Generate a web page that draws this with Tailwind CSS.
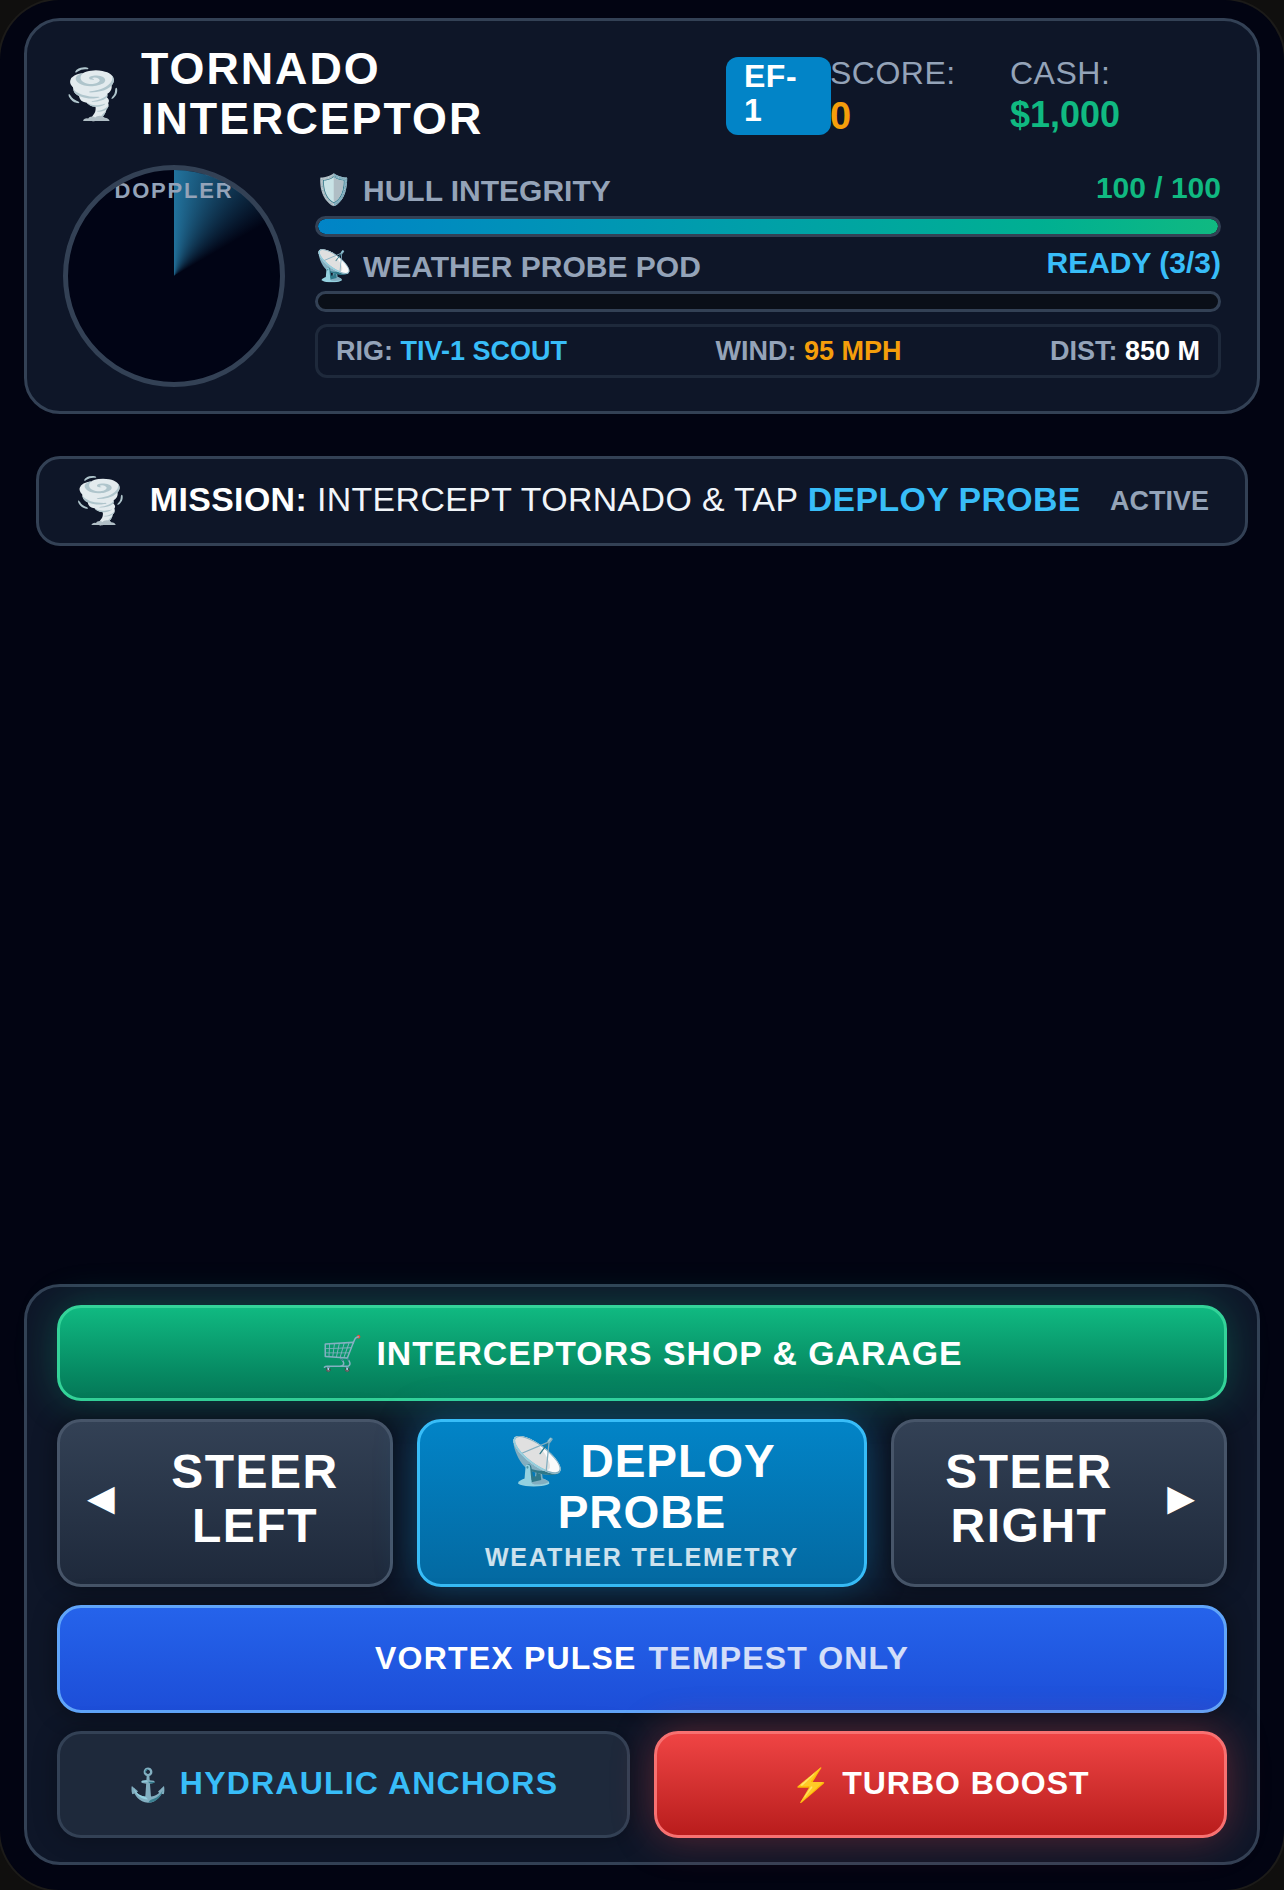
<!DOCTYPE html>
<html lang="en">
  <head>
    <meta charset="UTF-8" />
    <meta name="viewport" content="width=device-width, initial-scale=1.0" />
    <script src="https://cdn.jsdelivr.net/npm/@tailwindcss/browser@4"></script>
    <title>Tornado Interceptor</title>
  </head>
  <body class="bg-[#100f0e] font-['Liberation_Sans','Noto_Color_Emoji',sans-serif]">
    <div class="w-[1284px] h-[1890px] rounded-[60px] shadow-[0_0_0_2px_#1c1b19] bg-[#020412] flex flex-col justify-between px-[24px] pt-[18px] pb-[25px] overflow-hidden">
      <div>
        <!-- top hud -->
        <div class="h-[396px] border-[3px] border-[#334155] rounded-[36px] bg-[#0e1628] px-[36px] pt-[24px]">
          <div class="flex items-center h-[100px]">
            <div class="w-[78px] text-[48px] leading-none">🌪️</div>
            <h1 class="w-[585px] pb-[4px] text-[44.8px] leading-[50px] font-bold tracking-[2px] text-white">TORNADO<br />INTERCEPTOR</h1>
            <div class="w-[105px] h-[78px] mt-[2px] rounded-[12px] bg-[#0284c7] px-[18px] pt-[2px] text-[32px] leading-[34px] font-bold tracking-[0.5px] text-white">EF-<br />1</div>
            <div class="w-[180px] -ml-[1px] pb-[2px]">
              <div class="text-[32px] leading-[40px] tracking-[0.5px] text-[#94a3b8]">SCORE:</div>
              <div class="mt-[3px] text-[38px] leading-[40px] font-bold text-[#f59e0b]">0</div>
            </div>
            <div class="pb-[3px]">
              <div class="text-[32px] leading-[40px] tracking-[0.5px] text-[#94a3b8]">CASH:</div>
              <div class="mt-[2px] text-[36px] leading-[40px] font-bold text-[#10b981]">$1,000</div>
            </div>
          </div>
          <div class="flex gap-[30px] mt-[20px]">
            <div class="relative w-[222px] h-[222px] shrink-0 rounded-full border-[5px] border-[#334155] bg-[#010415] overflow-hidden">
              <div class="absolute inset-0 bg-[conic-gradient(rgba(56,189,248,0.6)_0deg,transparent_60deg)]"></div>
              <div class="absolute top-[8px] inset-x-0 text-center text-[22px] leading-[26px] font-bold tracking-[1.8px] text-[#94a3b8]">DOPPLER</div>
            </div>
            <div class="flex-1">
              <div class="flex justify-between h-[51px] pt-[8px]">
                <div class="flex items-center gap-[13px] h-[34px] text-[30px] font-bold text-[#94a3b8]"><span class="w-[35px] leading-none">🛡️</span>HULL INTEGRITY</div>
                <div class="-mt-[1px] text-[30px] leading-[32px] font-bold text-[#10b981]">100 / 100</div>
              </div>
              <div class="h-[21px] rounded-full border-[3px] border-[#334155] bg-[#0a0f18] overflow-hidden">
                <div class="h-full rounded-full bg-linear-to-r from-[#0284c7] to-[#10b981]"></div>
              </div>
              <div class="flex justify-between h-[54px] pt-[12px]">
                <div class="flex items-center gap-[13px] h-[34px] text-[30px] font-bold text-[#94a3b8]"><span class="w-[35px] leading-none">📡</span>WEATHER PROBE POD</div>
                <div class="-mt-[2px] text-[30px] leading-[32px] font-bold text-[#38bdf8]">READY (3/3)</div>
              </div>
              <div class="h-[21px] rounded-full border-[3px] border-[#334155] bg-[#0a0f18]"></div>
              <div class="flex justify-between items-center h-[54px] mt-[12px] px-[18px] rounded-[12px] border-[3px] border-[#1e293b] text-[27px] font-bold text-[#94a3b8]">
                <div>RIG: <span class="text-[#38bdf8]">TIV-1 SCOUT</span></div>
                <div>WIND: <span class="text-[#f59e0b]">95 MPH</span></div>
                <div>DIST: <span class="text-white">850 M</span></div>
              </div>
            </div>
          </div>
        </div>
        <!-- mission -->
        <div class="flex items-center justify-between h-[90px] mt-[42px] mx-[12px] pl-[34px] pr-[36px] rounded-[24px] border-[3px] border-[#334155] bg-[#0e1628]">
          <div class="flex items-center gap-[22px]">
            <span class="text-[44px] leading-none">🌪️</span>
            <div class="pb-[4px] text-[33.85px] tracking-[0.4px] text-[#f1f5f9] whitespace-nowrap"><b class="text-white">MISSION:</b> INTERCEPT TORNADO &amp; TAP <b class="text-[#38bdf8]">DEPLOY PROBE</b></div>
          </div>
          <div class="text-[27px] font-bold text-[#94a3b8]">ACTIVE</div>
        </div>
      </div>
      <!-- controls -->
      <div class="h-[581px] border-[3px] border-[#334155] rounded-[36px] bg-[#0e1628] px-[30px] pt-[18px] flex flex-col gap-[18px]">
        <button class="h-[96px] flex items-center justify-center gap-[12px] rounded-[24px] border-[3px] border-[#34d399] bg-linear-to-b from-[#10b981] to-[#047857] shadow-[0_0_40px_rgba(16,185,129,0.3)] text-[33.8px] font-bold tracking-[1px] text-white">
          <span>🛒</span>INTERCEPTORS SHOP &amp; GARAGE
        </button>
        <div class="grid grid-cols-[1fr_1.34fr_1fr] gap-[24px] h-[168px]">
          <button class="flex items-center pl-[27px] pr-[7px] rounded-[24px] border-[3px] border-[#475569] bg-linear-to-b from-[#334155] to-[#1e293b] shadow-[0_0_24px_rgba(0,0,0,0.4)] font-bold text-white">
            <span class="w-[40px] pb-[10px] text-left font-['DejaVu_Sans'] text-[36px]">◀&#xFE0E;</span>
            <span class="flex-1 pb-[8px] text-[48px] leading-[54px] tracking-[1.5px]">STEER LEFT</span>
          </button>
          <button class="flex flex-col items-center justify-center pt-[2px] rounded-[24px] border-[3px] border-[#38bdf8] bg-linear-to-b from-[#0284c7] to-[#0369a1] shadow-[0_0_40px_rgba(14,165,233,0.35)] font-bold text-white">
            <span class="text-[46px] leading-[50.6px] tracking-[1px]">📡 DEPLOY PROBE</span>
            <span class="mt-[4px] text-[25px] leading-[30px] tracking-[1.9px] text-white/80">WEATHER TELEMETRY</span>
          </button>
          <button class="flex items-center pr-[29px] pl-[9px] rounded-[24px] border-[3px] border-[#475569] bg-linear-to-b from-[#334155] to-[#1e293b] shadow-[0_0_24px_rgba(0,0,0,0.4)] font-bold text-white">
            <span class="flex-1 pb-[8px] text-[48px] leading-[54px] tracking-[1.5px]">STEER RIGHT</span>
            <span class="w-[40px] pb-[10px] text-right font-['DejaVu_Sans'] text-[36px]">▶&#xFE0E;</span>
          </button>
        </div>
        <button class="h-[108px] flex items-center justify-center gap-[12px] pb-[3px] rounded-[24px] border-[3px] border-[#60a5fa] bg-linear-to-b from-[#2563eb] to-[#1d4ed8] shadow-[0_0_24px_rgba(0,0,0,0.4)] text-[32px] font-bold tracking-[1.2px] text-white">
          VORTEX PULSE <span class="text-white/80">TEMPEST ONLY</span>
        </button>
        <div class="grid grid-cols-2 gap-[24px] h-[107px]">
          <button class="flex items-center justify-center gap-[10px] pb-[3px] rounded-[24px] border-[3px] border-[#334155] bg-[#1e293b] shadow-[0_0_24px_rgba(0,0,0,0.3)] text-[32px] font-bold tracking-[1.2px] text-[#38bdf8]">
            <span class="mt-[4px]">⚓</span>HYDRAULIC ANCHORS
          </button>
          <button class="flex items-center justify-center gap-[10px] pb-[3px] rounded-[24px] border-[3px] border-[#f87171] bg-linear-to-b from-[#ef4444] to-[#b91c1c] shadow-[0_0_40px_rgba(239,68,68,0.35)] text-[32px] font-bold tracking-[1px] text-white">
            <span class="mt-[4px]">⚡</span>TURBO BOOST
          </button>
        </div>
      </div>
    </div>
  </body>
</html>
